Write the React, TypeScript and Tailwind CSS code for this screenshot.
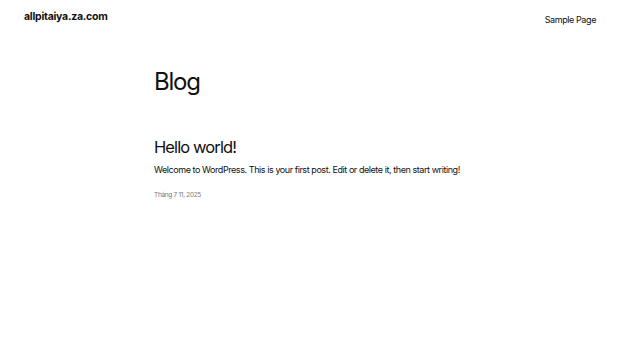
export default function App() {
  return (
    <div className="min-h-screen w-full bg-white text-[#111] font-['Inter',sans-serif]">
      {/* header */}
      <header className="flex items-center justify-between px-6 pt-[5px]">
        <a className="text-[10.5px] font-bold tracking-[-0.25px] leading-[16px]">allpitaiya.za.com</a>
        <nav>
          <a className="text-[9px] tracking-[-0.4px] leading-[16px]">Sample Page</a>
        </nav>
      </header>

      <main className="mx-auto w-[312px] pt-[37px]">
        <h1 className="text-[24px] leading-[32px] tracking-[-1.2px]">Blog</h1>

        <article className="pt-[37px]">
          <h2 className="text-[16.5px] leading-[24px] tracking-[-0.9px]">Hello world!</h2>
          <p className="mt-[4px] whitespace-nowrap text-[9px] leading-[14px] tracking-[-0.43px]">
            Welcome to WordPress. This is your first post. Edit or delete it, then start writing!
          </p>
          <p className="mt-[13px] text-[6.5px] leading-[10px] tracking-[-0.3px] text-[#777]">Tháng 7 11, 2025</p>
        </article>
      </main>
    </div>
  )
}
